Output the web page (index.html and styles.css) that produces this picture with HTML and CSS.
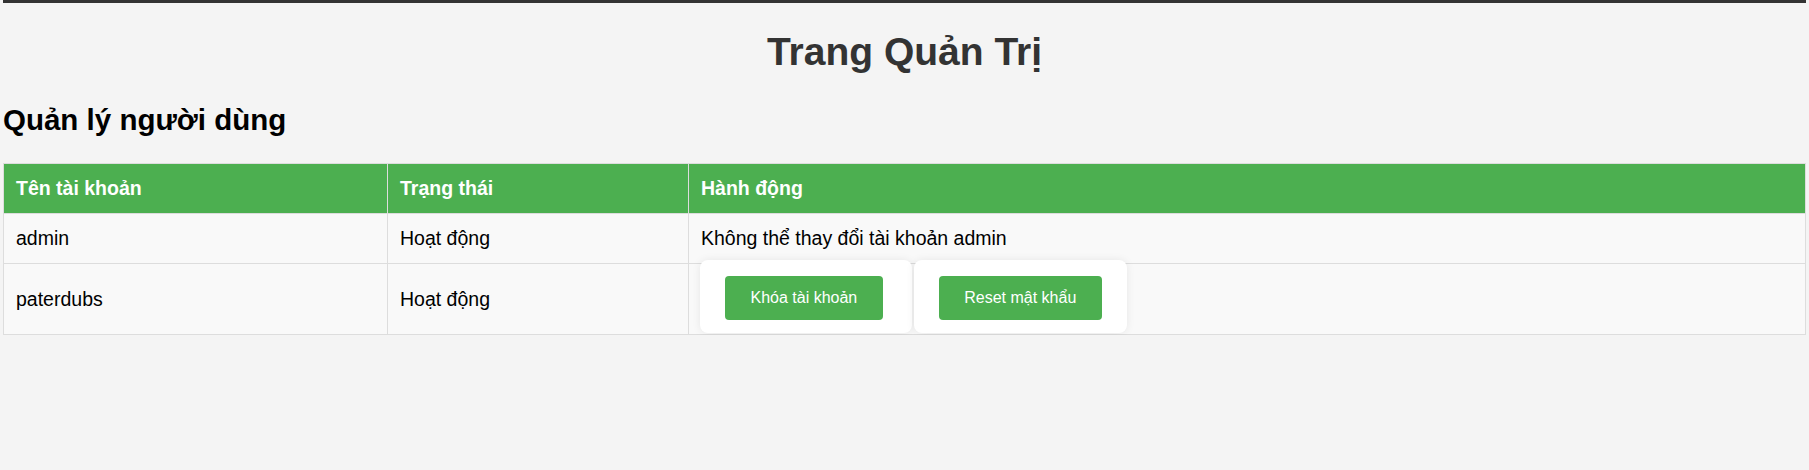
FILE: index.html
```html
<!DOCTYPE html>
<html lang="vi">
<head>
<meta charset="utf-8">
<title>Trang Quản Trị</title>
<link rel="stylesheet" href="styles.css">
</head>
<body>
<div class="topbar"></div>
<h1 class="page-title">Trang Quản Trị</h1>
<h2 class="section-title">Quản lý người dùng</h2>
<table class="user-table">
  <colgroup>
    <col class="col-name">
    <col class="col-status">
    <col class="col-actions">
  </colgroup>
  <thead>
    <tr>
      <th>Tên tài khoản</th>
      <th>Trạng thái</th>
      <th>Hành động</th>
    </tr>
  </thead>
  <tbody>
    <tr>
      <td>admin</td>
      <td>Hoạt động</td>
      <td>Không thể thay đổi tài khoản admin</td>
    </tr>
    <tr>
      <td>paterdubs</td>
      <td>Hoạt động</td>
      <td class="actions-cell">
        <div class="actions">
          <form class="action-form action-form-first"><button type="button" class="btn">Khóa tài khoản</button></form>
          <form class="action-form"><button type="button" class="btn">Reset mật khẩu</button></form>
        </div>
      </td>
    </tr>
  </tbody>
</table>
</body>
</html>
```
FILE: styles.css
```css
html, body {
  margin: 0;
  background: #f4f4f4;
}

body {
  padding: 0 3px;
  font-family: "Liberation Sans", Arial, sans-serif;
  font-size: 19.5px;
  color: #000;
}

.topbar {
  height: 3px;
  background: #333;
}

.page-title {
  margin: 26px 0 0;
  font-size: 39px;
  line-height: 45px;
  font-weight: bold;
  color: #333;
  text-align: center;
}

.section-title {
  margin: 29px 0 0;
  font-size: 29.5px;
  line-height: 34px;
  font-weight: bold;
  color: #000;
}

.user-table {
  width: 100%;
  margin-top: 26px;
  border-collapse: collapse;
  table-layout: fixed;
  background: #f9f9f9;
}

.col-name { width: 384px; }
.col-status { width: 301px; }

.user-table th,
.user-table td {
  border: 1px solid #ddd;
  padding: 12px;
  line-height: 25px;
  text-align: left;
  vertical-align: middle;
}

.user-table th {
  background: #4caf50;
  color: #fff;
  font-weight: bold;
}

.actions {
  display: flex;
  gap: 2px;
}

.action-form {
  margin: -16px 0 -11px -1px;
  padding: 16px 25px 13px;
  background: #fff;
  border-radius: 8px;
  box-shadow: 0 0 8px rgba(0, 0, 0, 0.08);
}

.action-form + .action-form {
  margin-left: 0;
}

.action-form-first {
  padding-right: 29px;
}

.btn {
  display: block;
  margin: 0;
  padding: 13px 25.5px;
  border: none;
  border-radius: 4px;
  background: #4caf50;
  color: #fff;
  font-family: "Liberation Sans", Arial, sans-serif;
  font-size: 16px;
  line-height: 18px;
  cursor: pointer;
}
```
